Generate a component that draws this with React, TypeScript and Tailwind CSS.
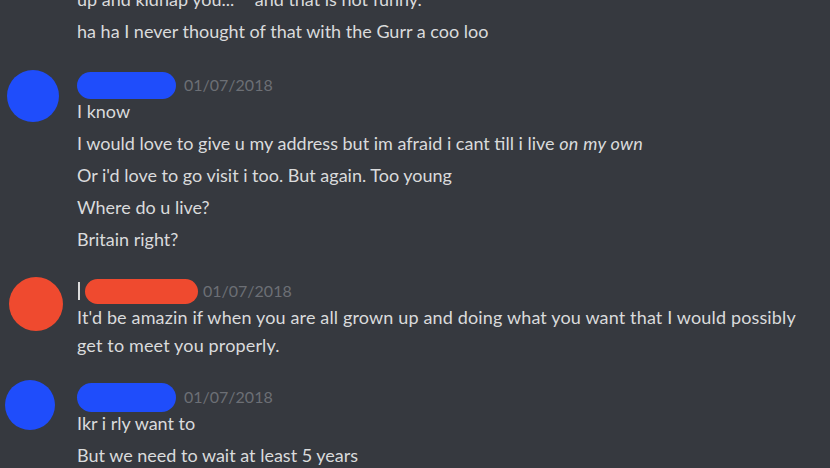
const font = { fontFamily: '"Lato", "Open Sans", sans-serif' };

function Line({ children }: { children: React.ReactNode }) {
    return <div className="py-[2px] leading-[28px]">{children}</div>;
}

function Header({ blobW, blobH, gap, color, mark }: { blobW: string; blobH: string; gap: string; color: string; mark?: boolean }) {
    return (
        <div className="h-[20px] flex items-center">
            {mark && <div className="ml-[1px] w-[2px] h-[18px] bg-[#dcdcdc] mr-[5px]" />}
            <div className={`${blobW} ${blobH} rounded-full`} style={{ backgroundColor: color }} />
            <span className={`${gap} text-[16px] text-[#6c6f75]`}>01/07/2018</span>
        </div>
    );
}

export default function App() {
    return (
        <div className="w-[830px] h-[468px] overflow-hidden bg-[#36393f] text-[#dadbdc] text-[18px]" style={font}>
            {/* continuation of previous message */}
            <div className="mt-[-17px] pl-[77px]">
                <Line>up and kidnap you... &nbsp;" and that is not funny."</Line>
                <Line>ha ha I never thought of that with the Gurr a coo loo</Line>
            </div>

            {/* blue user */}
            <div className="mt-[28px] flex">
                <div className="w-[77px] shrink-0">
                    <div className="ml-[7px] mt-[-5px] w-[52px] h-[52px] rounded-full bg-[#1f4dfb]" />
                </div>
                <div>
                    <Header blobW="w-[99px]" blobH="h-[27px]" gap="ml-[8px]" color="#1f4dfb" />
                    <Line>I know</Line>
                    <Line>I would love to give u my address but im afraid i cant till i live <em className="tracking-[0.3px]">on my own</em></Line>
                    <Line>Or i'd love to go visit i too. But again. Too young</Line>
                    <Line>Where do u live?</Line>
                    <Line>Britain right?</Line>
                </div>
            </div>

            {/* red user */}
            <div className="mt-[26px] flex">
                <div className="w-[77px] shrink-0">
                    <div className="ml-[9px] mt-[-4px] w-[54px] h-[54px] rounded-full bg-[#ef4a2f]" />
                </div>
                <div>
                    <Header blobW="w-[113px]" blobH="h-[25px]" gap="ml-[5px]" color="#ef4a2f" mark />
                    <div className="py-[2px] leading-[28px] w-[730px] tracking-[0.15px]">
                        It'd be amazin if when you are all grown up and doing what you want that I would possibly get to meet you properly.
                    </div>
                </div>
            </div>

            {/* blue user again */}
            <div className="mt-[26px] flex">
                <div className="w-[77px] shrink-0">
                    <div className="ml-[5px] mt-[-7px] w-[50px] h-[50px] rounded-full bg-[#1f4dfb]" />
                </div>
                <div>
                    <Header blobW="w-[99px]" blobH="h-[29px]" gap="ml-[8px]" color="#1f4dfb" />
                    <Line>Ikr i rly want to</Line>
                    <Line>But we need to wait at least 5 years</Line>
                </div>
            </div>
        </div>
    );
}
